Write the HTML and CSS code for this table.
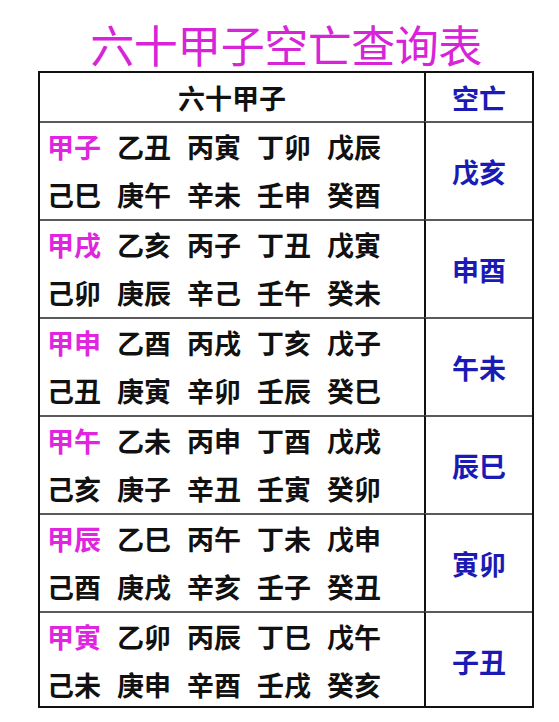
FILE: index.html
```html
<!DOCTYPE html>
<html lang="zh">
<head>
<meta charset="utf-8">
<title>六十甲子空亡查询表</title>
<link rel="stylesheet" href="styles.css">
</head>
<body>
<div class="page">
  <h1 class="title">六十甲子空亡查询表</h1>
  <div class="table">
    <div class="cell head">六十甲子</div>
    <div class="cell void head-void">空亡</div>

    <div class="cell seq">
      <div class="line"><span class="first">甲子</span><span>乙丑</span><span>丙寅</span><span>丁卯</span><span>戊辰</span></div>
      <div class="line"><span>己巳</span><span>庚午</span><span>辛未</span><span>壬申</span><span>癸酉</span></div>
    </div>
    <div class="cell void">戊亥</div>

    <div class="cell seq">
      <div class="line"><span class="first">甲戌</span><span>乙亥</span><span>丙子</span><span>丁丑</span><span>戊寅</span></div>
      <div class="line"><span>己卯</span><span>庚辰</span><span>辛己</span><span>壬午</span><span>癸未</span></div>
    </div>
    <div class="cell void">申酉</div>

    <div class="cell seq">
      <div class="line"><span class="first">甲申</span><span>乙酉</span><span>丙戌</span><span>丁亥</span><span>戊子</span></div>
      <div class="line"><span>己丑</span><span>庚寅</span><span>辛卯</span><span>壬辰</span><span>癸巳</span></div>
    </div>
    <div class="cell void">午未</div>

    <div class="cell seq">
      <div class="line"><span class="first">甲午</span><span>乙未</span><span>丙申</span><span>丁酉</span><span>戊戌</span></div>
      <div class="line"><span>己亥</span><span>庚子</span><span>辛丑</span><span>壬寅</span><span>癸卯</span></div>
    </div>
    <div class="cell void">辰巳</div>

    <div class="cell seq">
      <div class="line"><span class="first">甲辰</span><span>乙巳</span><span>丙午</span><span>丁未</span><span>戊申</span></div>
      <div class="line"><span>己酉</span><span>庚戌</span><span>辛亥</span><span>壬子</span><span>癸丑</span></div>
    </div>
    <div class="cell void">寅卯</div>

    <div class="cell seq">
      <div class="line"><span class="first">甲寅</span><span>乙卯</span><span>丙辰</span><span>丁巳</span><span>戊午</span></div>
      <div class="line"><span>己未</span><span>庚申</span><span>辛酉</span><span>壬戌</span><span>癸亥</span></div>
    </div>
    <div class="cell void">子丑</div>
  </div>
</div>
</body>
</html>
```
FILE: styles.css
```css
html, body {
  margin: 0;
  padding: 0;
  background: #ffffff;
}

.page {
  padding: 22px 0 0 38px;
  font-family: "Noto Sans CJK SC", "Noto Sans", sans-serif;
}

.title {
  margin: 0 0 5px 0;
  width: 496px;
  text-align: center;
  font-size: 44px;
  line-height: 44px;
  font-weight: 400;
  color: #d824d8;
  letter-spacing: -0.5px;
}

.table {
  box-sizing: border-box;
  width: 496px;
  height: 637px;
  display: grid;
  grid-template-columns: 384px 1fr;
  grid-template-rows: 48px repeat(6, 1fr);
  border: 2px solid #111111;
}

.cell {
  display: flex;
  align-items: center;
  font-weight: 700;
  font-size: 27px;
  color: #111111;
}

.head {
  justify-content: center;
  font-size: 27px;
}

.void {
  justify-content: center;
  border-left: 2px solid #111111;
  color: #1a1ab4;
  font-size: 27px;
}

.head-void {
  font-size: 27px;
}

.seq,
.seq + .void {
  border-top: 2px solid #5a5a5a;
}

.seq {
  flex-direction: column;
  align-items: flex-start;
  justify-content: center;
  padding-left: 7px;
}

.line {
  display: flex;
  gap: 16px;
  line-height: 48px;
}

.first {
  color: #e024e0;
}
```
